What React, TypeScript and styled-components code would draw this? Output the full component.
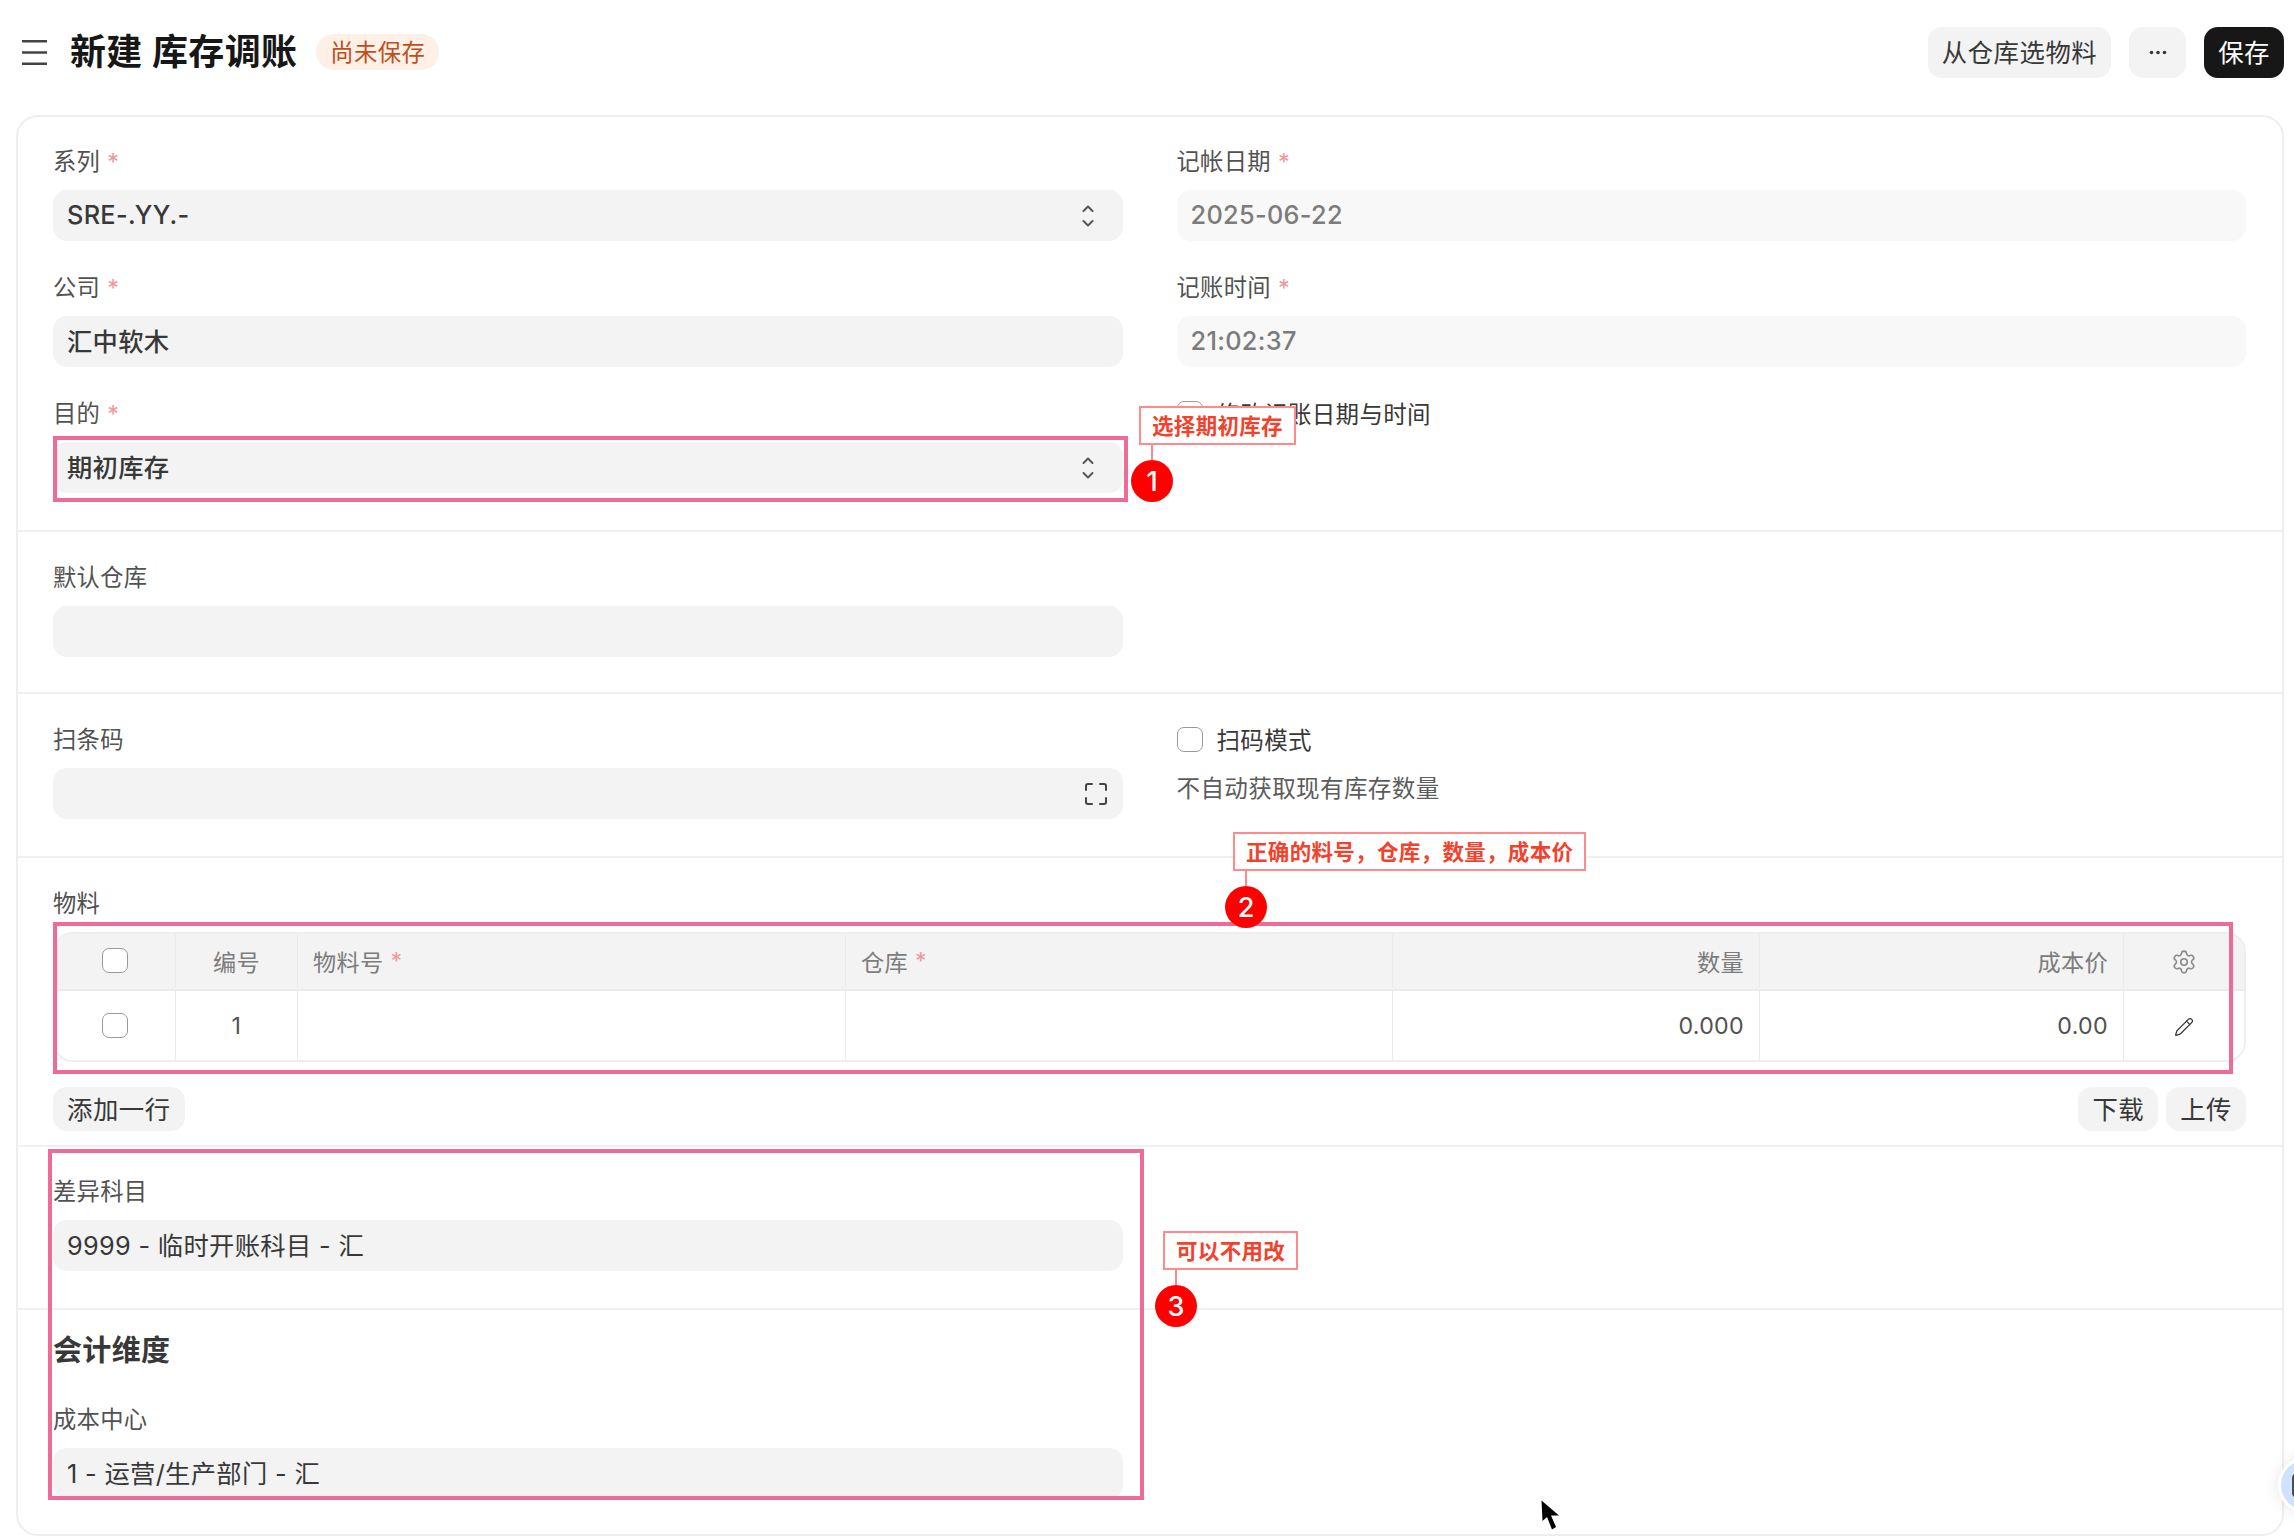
import React from 'react';
import styled, { createGlobalStyle } from 'styled-components';
import { Settings, Pencil } from 'lucide-react';

const GlobalStyle = createGlobalStyle`
  html, body {
    margin: 0;
    padding: 0;
    background: #ffffff;
  }
  body {
    font-family: Inter, "Noto Sans CJK SC", sans-serif;
    color: #383838;
    letter-spacing: 0.02em;
  }
  * {
    box-sizing: border-box;
  }
`;

const Page = styled.div`
  position: relative;
  width: 2294px;
  height: 1536px;
  overflow: hidden;
`;

/* page head */
const Header = styled.header`
  display: flex;
  align-items: center;
  padding: 27px 10px 37px 22px;
`;

const MenuIcon = styled.svg`
  width: 25px;
  height: 25px;
  margin-right: 23px;
  flex-shrink: 0;
`;

const Title = styled.h1`
  margin: 0;
  font-size: 36px;
  line-height: 51px;
  font-weight: 600;
  color: #171717;
`;

const StatusPill = styled.span`
  display: flex;
  align-items: center;
  height: 36px;
  margin: -2px 0 0 19px;
  padding: 0 14px 2px;
  border-radius: 18px;
  background: #fdf1e7;
  color: #bf4f1f;
  font-size: 23.4px;
`;

const HeaderActions = styled.div`
  display: flex;
  gap: 18px;
  margin-left: auto;
`;

const Button = styled.button<{ $primary?: boolean; $tall?: boolean }>`
  display: flex;
  align-items: center;
  justify-content: center;
  height: ${(p) => (p.$tall ? '51px' : '44px')};
  padding: 0 14px 3px;
  border: 0;
  border-radius: 14px;
  background: ${(p) => (p.$primary ? '#171717' : '#f3f3f3')};
  color: ${(p) => (p.$primary ? '#ffffff' : '#383838')};
  font-family: inherit;
  font-size: 25.4px;
  letter-spacing: 0.02em;
`;

const DotsButton = styled(Button)`
  width: 57px;
  padding: 0;
`;

/* form card */
const Card = styled.main`
  margin: 0 10px 0 16px;
  height: 1421px;
  border: 2px solid #eeeeee;
  border-radius: 22px;
`;

const Section = styled.section<{ $top?: number; $bottom?: number; $last?: boolean }>`
  padding: ${(p) => p.$top ?? 31}px 36px ${(p) => p.$bottom ?? 36}px 35px;
  border-bottom: ${(p) => (p.$last ? '0' : '2px solid #f0f0f0')};
`;

const FormGrid = styled.div`
  display: grid;
  grid-template-columns: 1fr 1fr;
  column-gap: 54px;
`;

const Stack = styled.div`
  display: flex;
  flex-direction: column;
  gap: 32px;
`;

const Field = styled.div`
  display: flex;
  flex-direction: column;
`;

const FieldLabel = styled.label`
  height: 30px;
  margin-bottom: 13px;
  font-size: 23.3px;
  line-height: 30px;
  color: #525252;
`;

const Required = styled.span`
  margin-left: 7px;
  color: #ef9a9a;
`;

const InputBox = styled.div<{ $readOnly?: boolean; $strong?: boolean }>`
  display: flex;
  align-items: center;
  justify-content: space-between;
  height: 51px;
  padding: 0 16px 3px 14px;
  border-radius: 14px;
  background: ${(p) => (p.$readOnly ? '#f8f8f8' : '#f3f3f3')};
  color: ${(p) => (p.$readOnly ? '#7c7c7c' : '#383838')};
  font-size: 25.3px;
  font-weight: ${(p) => (p.$strong ? 500 : 400)};
`;

const SelectArrows = styled.svg`
  width: 12px;
  height: 24px;
  margin: 3px 13px 0 0;
  flex-shrink: 0;
`;

const ScanIcon = styled.svg`
  width: 22px;
  height: 22px;
  margin-top: 3px;
  flex-shrink: 0;
`;

const CheckRow = styled.div`
  display: flex;
  align-items: center;
  height: 30px;
  gap: 14px;
  padding-bottom: 2px;
  font-size: 23.5px;
  color: #383838;
`;

const Checkbox = styled.span`
  display: block;
  width: 26px;
  height: 25px;
  border: 1px solid #999999;
  border-radius: 7px;
  background: #ffffff;
  flex-shrink: 0;
`;

const HelpText = styled.p`
  margin: 19px 0 0;
  font-size: 23.6px;
  line-height: 30px;
  color: #5c5c5c;
`;

const SectionTitle = styled.h2`
  margin: 0 0 34px;
  font-size: 29px;
  line-height: 40px;
  font-weight: 700;
  color: #383838;
`;

/* child table */
const TableBox = styled.div`
  border: 2px solid #eeeeee;
  border-radius: 20px;
  overflow: hidden;
`;

const TableRow = styled.div<{ $head?: boolean }>`
  display: grid;
  grid-template-columns: 121px 122px 548px 547px 367px 364px 1fr;
  height: ${(p) => (p.$head ? '57px' : '69px')};
  padding-bottom: ${(p) => (p.$head ? '2px' : '0')};
  background: ${(p) => (p.$head ? '#f3f3f3' : '#ffffff')};
  color: ${(p) => (p.$head ? '#7c7c7c' : '#525252')};
  border-bottom: ${(p) => (p.$head ? '2px solid #ebebeb' : '0')};
  font-size: 23.2px;
`;

const Cell = styled.div<{ $align?: 'left' | 'right' | 'center'; $last?: boolean }>`
  display: flex;
  align-items: center;
  justify-content: ${(p) =>
    p.$align === 'right' ? 'flex-end' : p.$align === 'center' ? 'center' : 'flex-start'};
  padding: 0 15px;
  border-right: ${(p) => (p.$last ? '0' : '1px solid #ebebeb')};
`;

const TableIcon = styled.span`
  display: flex;
  margin-top: 3px;
`;

const TableActions = styled.div`
  display: flex;
  align-items: center;
  margin-top: 25px;
`;

const RightButtons = styled.div`
  display: flex;
  gap: 8px;
  margin-left: auto;
`;

/* annotations drawn over the page */
const Highlight = styled.div<{ $x: number; $y: number; $w: number; $h: number }>`
  position: absolute;
  left: ${(p) => p.$x}px;
  top: ${(p) => p.$y}px;
  width: ${(p) => p.$w}px;
  height: ${(p) => p.$h}px;
  border: 4px solid #ee6b96;
  pointer-events: none;
`;

const Callout = styled.div<{ $x: number; $y: number }>`
  position: absolute;
  left: ${(p) => p.$x}px;
  top: ${(p) => p.$y}px;
  display: flex;
  flex-direction: column;
  align-items: flex-start;
`;

const CalloutText = styled.div`
  height: 39px;
  margin-left: 8px;
  padding: 0 11px;
  border: 2px solid #ff8a8a;
  background: #ffffff;
  color: #f4412b;
  font-size: 21.5px;
  font-weight: 700;
  line-height: 36px;
  white-space: nowrap;
`;

const CalloutLine = styled.div`
  width: 2px;
  height: 15px;
  margin-left: 20px;
  background: #ff8a8a;
`;

const CalloutNumber = styled.div`
  display: flex;
  align-items: center;
  justify-content: center;
  width: 42px;
  height: 42px;
  border-radius: 50%;
  background: #ff0000;
  color: #ffffff;
  font-size: 27px;
  font-weight: 500;
  letter-spacing: 0;
`;

const Cursor = styled.svg`
  position: absolute;
  left: 1538px;
  top: 1497px;
  width: 26px;
  height: 36px;
`;

const HelpBubble = styled.div`
  position: absolute;
  left: 2278px;
  top: 1457px;
  width: 56px;
  height: 56px;
  border: 3px solid #ffffff;
  border-radius: 50%;
  background: #cfe2ff;
  box-shadow: 0 0 16px rgba(0, 0, 0, 0.1);

  &::after {
    content: '';
    position: absolute;
    left: 11px;
    top: 13px;
    width: 20px;
    height: 25px;
    border-radius: 5px;
    background: #4f4a4a;
  }
`;

const Arrows = () => (
  <SelectArrows viewBox="0 0 12 24" fill="none" stroke="#555555" strokeWidth="2" strokeLinecap="round" strokeLinejoin="round">
    <path d="M1.5 7 6 2.5 10.5 7" />
    <path d="M1.5 17 6 21.5 10.5 17" />
  </SelectArrows>
);

type FormField = {
  label: string;
  value?: string;
  required?: boolean;
  select?: boolean;
  readOnly?: boolean;
  strong?: boolean;
};

const FieldBlock = ({ label, value, required, select, readOnly, strong }: FormField) => (
  <Field>
    <FieldLabel>
      {label}
      {required && <Required>*</Required>}
    </FieldLabel>
    <InputBox $readOnly={readOnly} $strong={strong}>
      <span>{value}</span>
      {select && <Arrows />}
    </InputBox>
  </Field>
);

const App = () => {
  return (
    <Page>
      <GlobalStyle />
      <Header>
        <MenuIcon viewBox="0 0 25 25" fill="none" stroke="#444444" strokeWidth="2.4">
          <path d="M0 1.2h25M0 12.5h25M0 23.8h25" />
        </MenuIcon>
        <Title>新建 库存调账</Title>
        <StatusPill>尚未保存</StatusPill>
        <HeaderActions>
          <Button $tall>从仓库选物料</Button>
          <DotsButton $tall aria-label="更多">
            <svg width="18" height="5" viewBox="0 0 18 5" fill="#383838">
              <circle cx="2.5" cy="2.5" r="1.8" />
              <circle cx="9" cy="2.5" r="1.8" />
              <circle cx="15.5" cy="2.5" r="1.8" />
            </svg>
          </DotsButton>
          <Button $tall $primary>保存</Button>
        </HeaderActions>
      </Header>

      <Card>
        <Section $top={30} $bottom={37}>
          <FormGrid>
            <Stack>
              <FieldBlock label="系列" required select value="SRE-.YY.-" strong />
              <FieldBlock label="公司" required value="汇中软木" strong />
              <FieldBlock label="目的" required select value="期初库存" strong />
            </Stack>
            <Stack>
              <FieldBlock label="记帐日期" required readOnly value="2025-06-22" strong />
              <FieldBlock label="记账时间" required readOnly value="21:02:37" strong />
              <CheckRow>
                <Checkbox />
                修改记账日期与时间
              </CheckRow>
            </Stack>
          </FormGrid>
        </Section>

        <Section $bottom={35}>
          <FormGrid>
            <FieldBlock label="默认仓库" />
          </FormGrid>
        </Section>

        <Section $bottom={37}>
          <FormGrid>
            <Field>
              <FieldLabel>扫条码</FieldLabel>
              <InputBox>
                <span />
                <ScanIcon viewBox="0 0 22 22" fill="none" stroke="#444444" strokeWidth="2" strokeLinecap="round">
                  <path d="M1 7V3a2 2 0 0 1 2-2h4M15 1h4a2 2 0 0 1 2 2v4M21 15v4a2 2 0 0 1-2 2h-4M7 21H3a2 2 0 0 1-2-2v-4" />
                </ScanIcon>
              </InputBox>
            </Field>
            <div>
              <CheckRow>
                <Checkbox />
                扫码模式
              </CheckRow>
              <HelpText>不自动获取现有库存数量</HelpText>
            </div>
          </FormGrid>
        </Section>

        <Section $bottom={14}>
          <FieldLabel as="div">物料</FieldLabel>
          <TableBox>
            <TableRow $head>
              <Cell $align="center"><Checkbox /></Cell>
              <Cell $align="center">编号</Cell>
              <Cell>物料号<Required>*</Required></Cell>
              <Cell>仓库<Required>*</Required></Cell>
              <Cell $align="right">数量</Cell>
              <Cell $align="right">成本价</Cell>
              <Cell $align="center" $last>
                <TableIcon><Settings size={26} strokeWidth={1.5} color="#8a8a8a" /></TableIcon>
              </Cell>
            </TableRow>
            <TableRow>
              <Cell $align="center"><Checkbox /></Cell>
              <Cell $align="center">1</Cell>
              <Cell />
              <Cell />
              <Cell $align="right">0.000</Cell>
              <Cell $align="right">0.00</Cell>
              <Cell $align="center" $last>
                <TableIcon><Pencil size={20} strokeWidth={1.5} color="#383838" /></TableIcon>
              </Cell>
            </TableRow>
          </TableBox>
          <TableActions>
            <Button>添加一行</Button>
            <RightButtons>
              <Button>下载</Button>
              <Button>上传</Button>
            </RightButtons>
          </TableActions>
        </Section>

        <Section $top={30} $bottom={37}>
          <FormGrid>
            <FieldBlock label="差异科目" value="9999 - 临时开账科目 - 汇" />
          </FormGrid>
        </Section>

        <Section $top={21} $bottom={0} $last>
          <SectionTitle>会计维度</SectionTitle>
          <FormGrid>
            <FieldBlock label="成本中心" value="1 - 运营/生产部门 - 汇" />
          </FormGrid>
        </Section>
      </Card>

      <Highlight $x={53} $y={436} $w={1075} $h={66} />
      <Highlight $x={53} $y={922} $w={2180} $h={152} />
      <Highlight $x={48} $y={1149} $w={1096} $h={351} />

      <Callout $x={1131} $y={406}>
        <CalloutText>选择期初库存</CalloutText>
        <CalloutLine />
        <CalloutNumber>1</CalloutNumber>
      </Callout>
      <Callout $x={1225} $y={832}>
        <CalloutText>正确的料号，仓库，数量，成本价</CalloutText>
        <CalloutLine />
        <CalloutNumber>2</CalloutNumber>
      </Callout>
      <Callout $x={1155} $y={1231}>
        <CalloutText>可以不用改</CalloutText>
        <CalloutLine />
        <CalloutNumber>3</CalloutNumber>
      </Callout>

      <Cursor viewBox="0 0 26 36">
        <path
          d="M3.5 3.5 4.5 24 9 20 14 32.5 18 30 13 18.5 21 18.5Z"
          fill="#000000"
          stroke="#ffffff"
          strokeWidth="2"
          paintOrder="stroke"
          strokeLinejoin="round"
        />
      </Cursor>
      <HelpBubble />
    </Page>
  );
};

export default App;
